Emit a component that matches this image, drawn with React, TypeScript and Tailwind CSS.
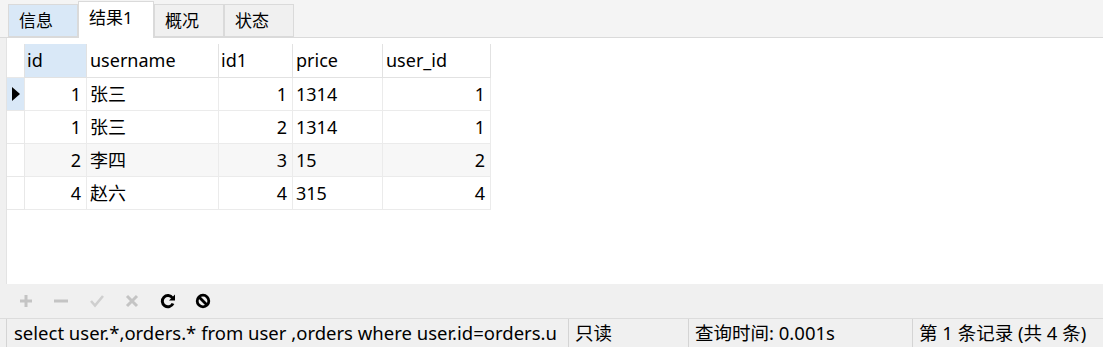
import React from "react"

const font = { fontFamily: '"Noto Sans", "Noto Sans CJK SC", sans-serif' }

type Row = { id: number; username: string; id1: number; price: string; user_id: number }

const rows: Row[] = [
  { id: 1, username: "张三", id1: 1, price: "1314", user_id: 1 },
  { id: 1, username: "张三", id1: 2, price: "1314", user_id: 1 },
  { id: 2, username: "李四", id1: 3, price: "15", user_id: 2 },
  { id: 4, username: "赵六", id1: 4, price: "315", user_id: 4 },
]

function Tab({ label, active, blue }: { label: string; active?: boolean; blue?: boolean }) {
  if (active) {
    return (
      <div className="h-[37px] -mb-px w-[76px] bg-white border border-b-0 border-[#dadada] pl-[10px] pt-[3px] text-[17px] text-black z-10">
        {label}
      </div>
    )
  }
  return (
    <div
      className={
        "h-[33px] w-[70px] border border-[#dadada] pl-[10px] pt-[3px] text-[17px] text-black " +
        (blue ? "bg-[#d9e8f7]" : "bg-[#f0f0f0]")
      }
    >
      {label}
    </div>
  )
}

function ToolIcon({ children }: { children: React.ReactNode }) {
  return <div className="w-[35.5px] h-[33px] flex items-center justify-center">{children}</div>
}

export default function App() {
  return (
    <div className="w-[1103px] h-[347px] bg-[#f0f0f0] flex flex-col overflow-hidden" style={font}>
      {/* tabs */}
      <div className="h-[38px] flex items-end pl-[8px] border-b border-[#dadada] bg-[#f4f4f4]">
        <Tab label="信息" blue />
        <Tab label="结果1" active />
        <Tab label="概况" />
        <Tab label="状态" />
      </div>

      {/* grid area */}
      <div className="flex-1 flex">
        <div className="w-[6px] bg-[#f0f0f0]" />
        <div className="flex-1 bg-white border-l border-[#e3e3e3] pt-[6px]">
          <table className="border-collapse text-[18px] text-black leading-none">
            <thead>
              <tr className="h-[33px]">
                <th className="w-[17px] border-r border-[#e2e2e2] bg-white p-0" />
                <th className="w-[62px] text-left font-normal pl-[2px] bg-[#d9e8f7] border-r border-b border-[#e2e2e2]">id</th>
                <th className="w-[132px] text-left font-normal pl-[3px] border-r border-b border-[#e2e2e2]">username</th>
                <th className="w-[74px] text-left font-normal pl-[2px] border-r border-b border-[#e2e2e2]">id1</th>
                <th className="w-[90px] text-left font-normal pl-[3px] border-r border-b border-[#e2e2e2]">price</th>
                <th className="w-[108px] text-left font-normal pl-[3px] border-r border-b border-[#e2e2e2]">user_id</th>
              </tr>
            </thead>
            <tbody>
              {rows.map((r, i) => (
                <tr key={i} className={"h-[33px] " + (i === 2 ? "bg-[#f7f7f7]" : "bg-white")}>
                  <td className={"p-0 border-r border-b border-t border-[#e8e8e8] " + (i === 0 ? "bg-[#d9e8f7]" : "bg-white")}>
                    {i === 0 && (
                      <svg width="17" height="20" viewBox="0 0 17 20" className="block">
                        <path d="M5 3 L13 10 L5 17 Z" fill="#000" />
                      </svg>
                    )}
                  </td>
                  <td className="text-right pr-[5px] border-r border-b border-[#ebebeb]">{r.id}</td>
                  <td className="text-left pl-[3px] border-r border-b border-[#ebebeb]">{r.username}</td>
                  <td className="text-right pr-[5px] border-r border-b border-[#ebebeb]">{r.id1}</td>
                  <td className="text-left pl-[3px] border-r border-b border-[#ebebeb]">{r.price}</td>
                  <td className="text-right pr-[5px] border-r border-b border-[#ebebeb]">{r.user_id}</td>
                </tr>
              ))}
            </tbody>
          </table>
        </div>
      </div>

      {/* toolbar */}
      <div className="h-[34px] flex items-center pl-[8px] bg-[#f0f0f0]">
        <ToolIcon>
          <svg width="14" height="14" viewBox="0 0 14 14">
            <path d="M7 1 V13 M1 7 H13" stroke="#c4c4c4" strokeWidth="3" />
          </svg>
        </ToolIcon>
        <ToolIcon>
          <svg width="16" height="14" viewBox="0 0 16 14">
            <path d="M1 7 H15" stroke="#c4c4c4" strokeWidth="3" />
          </svg>
        </ToolIcon>
        <ToolIcon>
          <svg width="16" height="14" viewBox="0 0 16 14">
            <path d="M2 7 L6 11.5 L14 2" stroke="#cfcfcf" strokeWidth="2.6" fill="none" />
          </svg>
        </ToolIcon>
        <ToolIcon>
          <svg width="14" height="14" viewBox="0 0 14 14">
            <path d="M2 2 L12 12 M12 2 L2 12" stroke="#c4c4c4" strokeWidth="3" />
          </svg>
        </ToolIcon>
        <ToolIcon>
          <svg width="16" height="16" viewBox="0 0 16 16">
            <path d="M12.5 5 A5.6 5.6 0 1 0 13 10.5" stroke="#000" strokeWidth="3" fill="none" />
            <path d="M15 1.5 L15 7.5 L9 7.5 Z" fill="#000" />
          </svg>
        </ToolIcon>
        <ToolIcon>
          <svg width="16" height="16" viewBox="0 0 16 16">
            <circle cx="8" cy="8" r="5.8" stroke="#000" strokeWidth="2.8" fill="none" />
            <path d="M4 4 L12 12" stroke="#000" strokeWidth="2.8" />
          </svg>
        </ToolIcon>
      </div>

      {/* status bar */}
      <div className="h-[29px] flex items-center border-t border-[#dcdcdc] bg-[#f0f0f0] text-[18.5px] text-black whitespace-nowrap">
        <div className="w-[6px]" />
        <div className="w-[562px] h-full border-l border-[#d4d4d4] pl-[7px] flex items-center overflow-hidden">
          select user.*,orders.* from user ,orders where user.id=orders.u
        </div>
        <div className="w-[120px] h-full border-l border-[#d4d4d4] pl-[6px] flex items-center">只读</div>
        <div className="w-[224px] h-full border-l border-[#d4d4d4] pl-[6px] flex items-center">查询时间: 0.001s</div>
        <div className="flex-1 h-full border-l border-[#d4d4d4] pl-[6px] flex items-center">第 1 条记录 (共 4 条)</div>
      </div>
    </div>
  )
}
